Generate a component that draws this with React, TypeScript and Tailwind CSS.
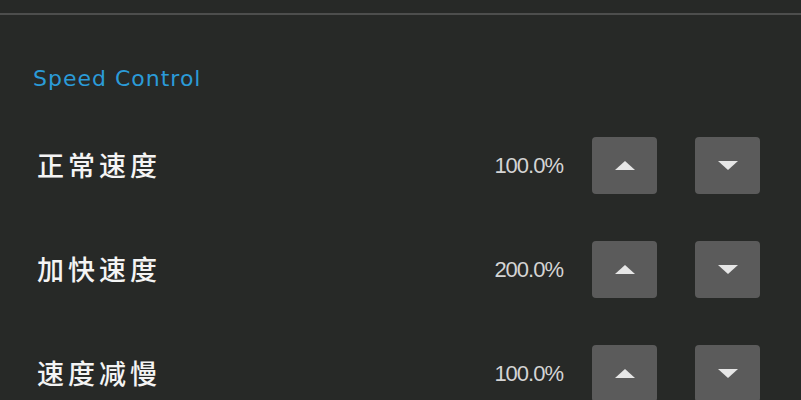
import React from "react";

const rows = [
  { label: "正常速度", value: "100.0%" },
  { label: "加快速度", value: "200.0%" },
  { label: "速度减慢", value: "100.0%" },
];

function Arrow({ up }: { up: boolean }) {
  return (
    <svg width="20" height="9" viewBox="0 0 20 9">
      {up ? (
        <polygon points="10,0 20,9 0,9" fill="#e6e6e6" />
      ) : (
        <polygon points="0,0 20,0 10,9" fill="#e6e6e6" />
      )}
    </svg>
  );
}

export default function App() {
  return (
    <div className="w-[801px] h-[400px] overflow-hidden bg-[#272927] flex flex-col">
      <div className="h-[13px] shrink-0" />
      <div className="h-[2px] shrink-0 bg-[#4d4e4d]" />
      <div
        className="pl-[33px] pt-[51px] h-[98px] shrink-0 text-[22px] leading-[26px] tracking-[1px] text-[#2b9bd8]"
        style={{ fontFamily: '"DejaVu Sans", sans-serif' }}
      >
        Speed Control
      </div>
      {rows.map((r, i) => (
        <div key={i} className="h-[104px] shrink-0 flex items-center pl-[37px] pr-[41px]">
          <div
            className="flex-1 text-[27px] tracking-[4px] text-[#f4f4f4] font-medium"
            style={{ fontFamily: '"Noto Sans CJK SC", "Noto Sans", sans-serif' }}
          >
            {r.label}
          </div>
          <div
            className="text-[22px] tracking-[-1px] text-[#d4d4d4] mr-[29px]"
            style={{ fontFamily: '"Liberation Sans", sans-serif' }}
          >
            {r.value}
          </div>
          <div className="w-[65px] h-[57px] rounded-[4px] bg-[#5b5b5b] flex items-center justify-center">
            <Arrow up={true} />
          </div>
          <div className="w-[65px] h-[57px] ml-[38px] rounded-[4px] bg-[#5b5b5b] flex items-center justify-center">
            <Arrow up={false} />
          </div>
        </div>
      ))}
    </div>
  );
}
